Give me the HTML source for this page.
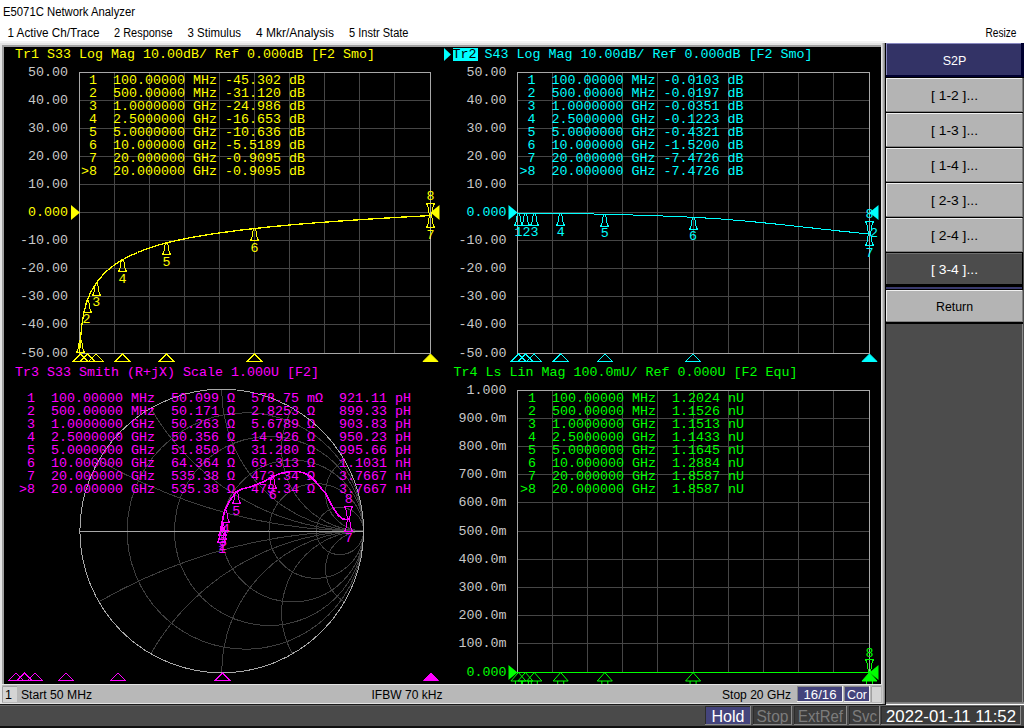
<!DOCTYPE html><html><head><meta charset="utf-8"><style>html,body{margin:0;padding:0;width:1024px;height:728px;overflow:hidden;background:#fff}svg{display:block}text{white-space:pre}</style></head><body>
<svg width="1024" height="728" viewBox="0 0 1024 728">
<rect x="0" y="0" width="1024" height="728" fill="#ffffff"/>
<text x="3" y="16" fill="#000" font-family="'Liberation Sans', sans-serif" font-size="12.5" text-anchor="start" textLength="132" lengthAdjust="spacingAndGlyphs" xml:space="preserve" >E5071C Network Analyzer</text>
<text x="7.5" y="37" fill="#000" font-family="'Liberation Sans', sans-serif" font-size="12.5" text-anchor="start" textLength="92" lengthAdjust="spacingAndGlyphs" xml:space="preserve" >1 Active Ch/Trace</text>
<text x="114" y="37" fill="#000" font-family="'Liberation Sans', sans-serif" font-size="12.5" text-anchor="start" textLength="58.5" lengthAdjust="spacingAndGlyphs" xml:space="preserve" >2 Response</text>
<text x="187.5" y="37" fill="#000" font-family="'Liberation Sans', sans-serif" font-size="12.5" text-anchor="start" textLength="53.5" lengthAdjust="spacingAndGlyphs" xml:space="preserve" >3 Stimulus</text>
<text x="256" y="37" fill="#000" font-family="'Liberation Sans', sans-serif" font-size="12.5" text-anchor="start" textLength="78" lengthAdjust="spacingAndGlyphs" xml:space="preserve" >4 Mkr/Analysis</text>
<text x="349" y="37" fill="#000" font-family="'Liberation Sans', sans-serif" font-size="12.5" text-anchor="start" textLength="59.5" lengthAdjust="spacingAndGlyphs" xml:space="preserve" >5 Instr State</text>
<text x="985.5" y="37" fill="#000" font-family="'Liberation Sans', sans-serif" font-size="12.5" text-anchor="start" textLength="31" lengthAdjust="spacingAndGlyphs" xml:space="preserve" >Resize</text>
<rect x="0" y="41" width="885" height="664" fill="#e4e4e4"/>
<rect x="0" y="41" width="885" height="2" fill="#f2f2f2"/>
<rect x="2" y="45" width="879" height="2" fill="#a0a0a0"/>
<rect x="2" y="45" width="2" height="639" fill="#a0a0a0"/>
<rect x="882" y="43" width="1" height="661" fill="#c8c8c8"/>
<rect x="883" y="43" width="1" height="661" fill="#a8a8a8"/>
<rect x="884" y="43" width="1" height="661" fill="#8a8a8a"/>
<rect x="885" y="43" width="1" height="662" fill="#000"/>
<rect x="4" y="47" width="877" height="637" fill="#000"/>
<rect x="886" y="43" width="138" height="660" fill="#4c4c4c"/>
<line x1="114.5" y1="72" x2="114.5" y2="353" stroke="#464646" stroke-width="1"/>
<line x1="149.5" y1="72" x2="149.5" y2="353" stroke="#464646" stroke-width="1"/>
<line x1="184.5" y1="72" x2="184.5" y2="353" stroke="#464646" stroke-width="1"/>
<line x1="219.5" y1="72" x2="219.5" y2="353" stroke="#464646" stroke-width="1"/>
<line x1="254.5" y1="72" x2="254.5" y2="353" stroke="#464646" stroke-width="1"/>
<line x1="289.5" y1="72" x2="289.5" y2="353" stroke="#464646" stroke-width="1"/>
<line x1="324.5" y1="72" x2="324.5" y2="353" stroke="#464646" stroke-width="1"/>
<line x1="359.5" y1="72" x2="359.5" y2="353" stroke="#464646" stroke-width="1"/>
<line x1="394.5" y1="72" x2="394.5" y2="353" stroke="#464646" stroke-width="1"/>
<line x1="79" y1="100.5" x2="430" y2="100.5" stroke="#464646" stroke-width="1"/>
<line x1="79" y1="128.5" x2="430" y2="128.5" stroke="#464646" stroke-width="1"/>
<line x1="79" y1="156.5" x2="430" y2="156.5" stroke="#464646" stroke-width="1"/>
<line x1="79" y1="184.5" x2="430" y2="184.5" stroke="#464646" stroke-width="1"/>
<line x1="79" y1="212.5" x2="430" y2="212.5" stroke="#464646" stroke-width="1"/>
<line x1="79" y1="240.5" x2="430" y2="240.5" stroke="#464646" stroke-width="1"/>
<line x1="79" y1="268.5" x2="430" y2="268.5" stroke="#464646" stroke-width="1"/>
<line x1="79" y1="296.5" x2="430" y2="296.5" stroke="#464646" stroke-width="1"/>
<line x1="79" y1="324.5" x2="430" y2="324.5" stroke="#464646" stroke-width="1"/>
<rect x="79.5" y="72.5" width="351" height="281" fill="none" stroke="#a8a8a8" stroke-width="1"/>
<line x1="552.5" y1="72" x2="552.5" y2="353" stroke="#464646" stroke-width="1"/>
<line x1="587.5" y1="72" x2="587.5" y2="353" stroke="#464646" stroke-width="1"/>
<line x1="622.5" y1="72" x2="622.5" y2="353" stroke="#464646" stroke-width="1"/>
<line x1="657.5" y1="72" x2="657.5" y2="353" stroke="#464646" stroke-width="1"/>
<line x1="693.5" y1="72" x2="693.5" y2="353" stroke="#464646" stroke-width="1"/>
<line x1="728.5" y1="72" x2="728.5" y2="353" stroke="#464646" stroke-width="1"/>
<line x1="763.5" y1="72" x2="763.5" y2="353" stroke="#464646" stroke-width="1"/>
<line x1="798.5" y1="72" x2="798.5" y2="353" stroke="#464646" stroke-width="1"/>
<line x1="833.5" y1="72" x2="833.5" y2="353" stroke="#464646" stroke-width="1"/>
<line x1="517" y1="100.5" x2="869" y2="100.5" stroke="#464646" stroke-width="1"/>
<line x1="517" y1="128.5" x2="869" y2="128.5" stroke="#464646" stroke-width="1"/>
<line x1="517" y1="156.5" x2="869" y2="156.5" stroke="#464646" stroke-width="1"/>
<line x1="517" y1="184.5" x2="869" y2="184.5" stroke="#464646" stroke-width="1"/>
<line x1="517" y1="212.5" x2="869" y2="212.5" stroke="#464646" stroke-width="1"/>
<line x1="517" y1="240.5" x2="869" y2="240.5" stroke="#464646" stroke-width="1"/>
<line x1="517" y1="268.5" x2="869" y2="268.5" stroke="#464646" stroke-width="1"/>
<line x1="517" y1="296.5" x2="869" y2="296.5" stroke="#464646" stroke-width="1"/>
<line x1="517" y1="324.5" x2="869" y2="324.5" stroke="#464646" stroke-width="1"/>
<rect x="517.5" y="72.5" width="352" height="281" fill="none" stroke="#a8a8a8" stroke-width="1"/>
<line x1="552.5" y1="390" x2="552.5" y2="672" stroke="#464646" stroke-width="1"/>
<line x1="587.5" y1="390" x2="587.5" y2="672" stroke="#464646" stroke-width="1"/>
<line x1="622.5" y1="390" x2="622.5" y2="672" stroke="#464646" stroke-width="1"/>
<line x1="657.5" y1="390" x2="657.5" y2="672" stroke="#464646" stroke-width="1"/>
<line x1="693.5" y1="390" x2="693.5" y2="672" stroke="#464646" stroke-width="1"/>
<line x1="728.5" y1="390" x2="728.5" y2="672" stroke="#464646" stroke-width="1"/>
<line x1="763.5" y1="390" x2="763.5" y2="672" stroke="#464646" stroke-width="1"/>
<line x1="798.5" y1="390" x2="798.5" y2="672" stroke="#464646" stroke-width="1"/>
<line x1="833.5" y1="390" x2="833.5" y2="672" stroke="#464646" stroke-width="1"/>
<line x1="517" y1="418.5" x2="869" y2="418.5" stroke="#464646" stroke-width="1"/>
<line x1="517" y1="446.5" x2="869" y2="446.5" stroke="#464646" stroke-width="1"/>
<line x1="517" y1="474.5" x2="869" y2="474.5" stroke="#464646" stroke-width="1"/>
<line x1="517" y1="502.5" x2="869" y2="502.5" stroke="#464646" stroke-width="1"/>
<line x1="517" y1="531.5" x2="869" y2="531.5" stroke="#464646" stroke-width="1"/>
<line x1="517" y1="559.5" x2="869" y2="559.5" stroke="#464646" stroke-width="1"/>
<line x1="517" y1="587.5" x2="869" y2="587.5" stroke="#464646" stroke-width="1"/>
<line x1="517" y1="615.5" x2="869" y2="615.5" stroke="#464646" stroke-width="1"/>
<line x1="517" y1="643.5" x2="869" y2="643.5" stroke="#464646" stroke-width="1"/>
<rect x="517.5" y="390.5" width="352" height="282" fill="none" stroke="#a8a8a8" stroke-width="1"/>
<text x="68" y="75.8" fill="#c8c8c8" font-family="'Liberation Mono', monospace" font-size="13.333" xml:space="preserve" text-anchor="end">50.00</text>
<text x="68" y="103.8" fill="#c8c8c8" font-family="'Liberation Mono', monospace" font-size="13.333" xml:space="preserve" text-anchor="end">40.00</text>
<text x="68" y="131.8" fill="#c8c8c8" font-family="'Liberation Mono', monospace" font-size="13.333" xml:space="preserve" text-anchor="end">30.00</text>
<text x="68" y="159.8" fill="#c8c8c8" font-family="'Liberation Mono', monospace" font-size="13.333" xml:space="preserve" text-anchor="end">20.00</text>
<text x="68" y="187.8" fill="#c8c8c8" font-family="'Liberation Mono', monospace" font-size="13.333" xml:space="preserve" text-anchor="end">10.00</text>
<text x="68" y="215.8" fill="#ffff00" font-family="'Liberation Mono', monospace" font-size="13.333" xml:space="preserve" text-anchor="end">0.000</text>
<text x="68" y="243.8" fill="#c8c8c8" font-family="'Liberation Mono', monospace" font-size="13.333" xml:space="preserve" text-anchor="end">-10.00</text>
<text x="68" y="271.8" fill="#c8c8c8" font-family="'Liberation Mono', monospace" font-size="13.333" xml:space="preserve" text-anchor="end">-20.00</text>
<text x="68" y="299.8" fill="#c8c8c8" font-family="'Liberation Mono', monospace" font-size="13.333" xml:space="preserve" text-anchor="end">-30.00</text>
<text x="68" y="327.8" fill="#c8c8c8" font-family="'Liberation Mono', monospace" font-size="13.333" xml:space="preserve" text-anchor="end">-40.00</text>
<text x="68" y="356.8" fill="#c8c8c8" font-family="'Liberation Mono', monospace" font-size="13.333" xml:space="preserve" text-anchor="end">-50.00</text>
<text x="506.5" y="75.8" fill="#c8c8c8" font-family="'Liberation Mono', monospace" font-size="13.333" xml:space="preserve" text-anchor="end">50.00</text>
<text x="506.5" y="103.8" fill="#c8c8c8" font-family="'Liberation Mono', monospace" font-size="13.333" xml:space="preserve" text-anchor="end">40.00</text>
<text x="506.5" y="131.8" fill="#c8c8c8" font-family="'Liberation Mono', monospace" font-size="13.333" xml:space="preserve" text-anchor="end">30.00</text>
<text x="506.5" y="159.8" fill="#c8c8c8" font-family="'Liberation Mono', monospace" font-size="13.333" xml:space="preserve" text-anchor="end">20.00</text>
<text x="506.5" y="187.8" fill="#c8c8c8" font-family="'Liberation Mono', monospace" font-size="13.333" xml:space="preserve" text-anchor="end">10.00</text>
<text x="506.5" y="215.8" fill="#00ffff" font-family="'Liberation Mono', monospace" font-size="13.333" xml:space="preserve" text-anchor="end">0.000</text>
<text x="506.5" y="243.8" fill="#c8c8c8" font-family="'Liberation Mono', monospace" font-size="13.333" xml:space="preserve" text-anchor="end">-10.00</text>
<text x="506.5" y="271.8" fill="#c8c8c8" font-family="'Liberation Mono', monospace" font-size="13.333" xml:space="preserve" text-anchor="end">-20.00</text>
<text x="506.5" y="299.8" fill="#c8c8c8" font-family="'Liberation Mono', monospace" font-size="13.333" xml:space="preserve" text-anchor="end">-30.00</text>
<text x="506.5" y="327.8" fill="#c8c8c8" font-family="'Liberation Mono', monospace" font-size="13.333" xml:space="preserve" text-anchor="end">-40.00</text>
<text x="506.5" y="356.8" fill="#c8c8c8" font-family="'Liberation Mono', monospace" font-size="13.333" xml:space="preserve" text-anchor="end">-50.00</text>
<text x="506.5" y="393.8" fill="#c8c8c8" font-family="'Liberation Mono', monospace" font-size="13.333" xml:space="preserve" text-anchor="end">1.000</text>
<text x="506.5" y="421.8" fill="#c8c8c8" font-family="'Liberation Mono', monospace" font-size="13.333" xml:space="preserve" text-anchor="end">900.0m</text>
<text x="506.5" y="449.8" fill="#c8c8c8" font-family="'Liberation Mono', monospace" font-size="13.333" xml:space="preserve" text-anchor="end">800.0m</text>
<text x="506.5" y="477.8" fill="#c8c8c8" font-family="'Liberation Mono', monospace" font-size="13.333" xml:space="preserve" text-anchor="end">700.0m</text>
<text x="506.5" y="505.8" fill="#c8c8c8" font-family="'Liberation Mono', monospace" font-size="13.333" xml:space="preserve" text-anchor="end">600.0m</text>
<text x="506.5" y="534.8" fill="#c8c8c8" font-family="'Liberation Mono', monospace" font-size="13.333" xml:space="preserve" text-anchor="end">500.0m</text>
<text x="506.5" y="562.8" fill="#c8c8c8" font-family="'Liberation Mono', monospace" font-size="13.333" xml:space="preserve" text-anchor="end">400.0m</text>
<text x="506.5" y="590.8" fill="#c8c8c8" font-family="'Liberation Mono', monospace" font-size="13.333" xml:space="preserve" text-anchor="end">300.0m</text>
<text x="506.5" y="618.8" fill="#c8c8c8" font-family="'Liberation Mono', monospace" font-size="13.333" xml:space="preserve" text-anchor="end">200.0m</text>
<text x="506.5" y="646.8" fill="#c8c8c8" font-family="'Liberation Mono', monospace" font-size="13.333" xml:space="preserve" text-anchor="end">100.0m</text>
<text x="506.5" y="675.8" fill="#00ff00" font-family="'Liberation Mono', monospace" font-size="13.333" xml:space="preserve" text-anchor="end">0.000</text>
<g fill="none" stroke="#3e3e3e" stroke-width="1" shape-rendering="crispEdges">
<circle cx="245.33" cy="531.0" r="118.17"/>
<circle cx="268.97" cy="531.0" r="94.53"/>
<circle cx="292.60" cy="531.0" r="70.90"/>
<circle cx="316.23" cy="531.0" r="47.27"/>
<circle cx="339.87" cy="531.0" r="23.63"/>
</g>
<clipPath id="uc"><circle cx="221.7" cy="531.0" r="141.8"/></clipPath>
<g fill="none" stroke="#3e3e3e" stroke-width="1" clip-path="url(#uc)" shape-rendering="crispEdges">
<circle cx="363.50" cy="1.80" r="529.20"/>
<circle cx="363.50" cy="1060.20" r="529.20"/>
<circle cx="363.50" cy="285.40" r="245.60"/>
<circle cx="363.50" cy="776.60" r="245.60"/>
<circle cx="363.50" cy="389.20" r="141.80"/>
<circle cx="363.50" cy="672.80" r="141.80"/>
<circle cx="363.50" cy="449.13" r="81.87"/>
<circle cx="363.50" cy="612.87" r="81.87"/>
<circle cx="363.50" cy="493.00" r="38.00"/>
<circle cx="363.50" cy="569.00" r="38.00"/>
</g>
<line x1="79.89999999999998" y1="531.5" x2="363.5" y2="531.5" stroke="#a8a8a8" stroke-width="1"/>
<circle cx="221.7" cy="531.0" r="141.8" fill="none" stroke="#a8a8a8" stroke-width="1" shape-rendering="crispEdges"/>
<polyline fill="none" stroke="#ffff00" stroke-width="1.3" shape-rendering="crispEdges" points="79.5,353.5 80.1,344.8 80.7,336.5 81.3,330.3 81.8,325.3 82.4,321.2 83.0,317.6 83.6,314.5 84.2,311.8 84.8,309.3 85.4,307.1 85.9,305.0 86.5,303.1 87.1,301.3 87.7,299.7 88.3,298.1 88.9,296.6 89.5,295.3 90.0,294.0 90.6,292.7 91.2,291.5 91.8,290.4 92.4,289.3 93.0,288.3 93.6,287.3 94.1,286.3 94.7,285.4 95.3,284.5 95.9,283.7 96.5,282.8 97.1,282.0 97.7,281.2 98.3,280.4 98.8,279.7 99.4,279.0 100.0,278.2 100.6,277.5 101.2,276.9 101.8,276.2 102.4,275.6 102.9,274.9 103.5,274.3 104.1,273.7 104.7,273.1 105.3,272.6 105.9,272.0 106.5,271.5 107.0,270.9 107.6,270.4 108.2,269.9 108.8,269.4 109.4,268.9 110.0,268.4 110.6,267.9 111.1,267.5 111.7,267.0 112.3,266.5 112.9,266.1 113.5,265.7 114.1,265.2 114.7,264.8 115.2,264.4 115.8,264.0 116.4,263.6 117.0,263.2 117.6,262.8 118.2,262.5 118.8,262.1 119.3,261.7 119.9,261.4 120.5,261.0 121.1,260.7 121.7,260.3 122.3,260.0 122.9,259.6 123.4,259.3 124.0,259.0 124.6,258.7 125.2,258.4 125.8,258.0 126.4,257.7 127.0,257.4 127.6,257.1 128.1,256.8 128.7,256.5 129.3,256.2 129.9,256.0 130.5,255.7 131.1,255.4 131.7,255.1 132.2,254.8 132.8,254.6 133.4,254.3 134.0,254.0 134.6,253.8 135.2,253.5 135.8,253.2 136.3,253.0 136.9,252.7 137.5,252.5 138.1,252.2 138.7,252.0 139.3,251.8 139.9,251.5 140.4,251.3 141.0,251.0 141.6,250.8 142.2,250.6 142.8,250.4 143.4,250.1 144.0,249.9 144.5,249.7 145.1,249.5 145.7,249.3 146.3,249.0 146.9,248.8 147.5,248.6 148.1,248.4 148.6,248.2 149.2,248.0 149.8,247.8 150.4,247.6 151.0,247.4 151.6,247.2 152.2,247.0 152.7,246.9 153.3,246.7 153.9,246.5 154.5,246.3 155.1,246.1 155.7,245.9 156.3,245.8 156.8,245.6 157.4,245.4 158.0,245.2 158.6,245.1 159.2,244.9 159.8,244.7 160.4,244.6 161.0,244.4 161.5,244.2 162.1,244.1 162.7,243.9 163.3,243.8 163.9,243.6 164.5,243.4 165.1,243.3 165.6,243.1 166.2,243.0 166.8,242.8 167.4,242.7 168.0,242.5 168.6,242.4 169.2,242.2 169.7,242.1 170.3,242.0 170.9,241.8 171.5,241.7 172.1,241.5 172.7,241.4 173.3,241.3 173.8,241.1 174.4,241.0 175.0,240.9 175.6,240.7 176.2,240.6 176.8,240.5 177.4,240.3 177.9,240.2 178.5,240.1 179.1,240.0 179.7,239.8 180.3,239.7 180.9,239.6 181.5,239.5 182.0,239.3 182.6,239.2 183.2,239.1 183.8,239.0 184.4,238.9 185.0,238.7 185.6,238.6 186.1,238.5 186.7,238.4 187.3,238.3 187.9,238.2 188.5,238.1 189.1,237.9 189.7,237.8 190.2,237.7 190.8,237.6 191.4,237.5 192.0,237.4 192.6,237.3 193.2,237.2 193.8,237.1 194.4,237.0 194.9,236.9 195.5,236.7 196.1,236.6 196.7,236.5 197.3,236.4 197.9,236.3 198.5,236.2 199.0,236.1 199.6,236.0 200.2,235.9 200.8,235.8 201.4,235.7 202.0,235.6 202.6,235.5 203.1,235.4 203.7,235.3 204.3,235.2 204.9,235.2 205.5,235.1 206.1,235.0 206.7,234.9 207.2,234.8 207.8,234.7 208.4,234.6 209.0,234.5 209.6,234.4 210.2,234.3 210.8,234.2 211.3,234.1 211.9,234.0 212.5,234.0 213.1,233.9 213.7,233.8 214.3,233.7 214.9,233.6 215.4,233.5 216.0,233.4 216.6,233.3 217.2,233.3 217.8,233.2 218.4,233.1 219.0,233.0 219.5,232.9 220.1,232.8 220.7,232.8 221.3,232.7 221.9,232.6 222.5,232.5 223.1,232.4 223.7,232.3 224.2,232.3 224.8,232.2 225.4,232.1 226.0,232.0 226.6,231.9 227.2,231.9 227.8,231.8 228.3,231.7 228.9,231.6 229.5,231.5 230.1,231.5 230.7,231.4 231.3,231.3 231.9,231.2 232.4,231.2 233.0,231.1 233.6,231.0 234.2,230.9 234.8,230.9 235.4,230.8 236.0,230.7 236.5,230.6 237.1,230.6 237.7,230.5 238.3,230.4 238.9,230.3 239.5,230.3 240.1,230.2 240.6,230.1 241.2,230.1 241.8,230.0 242.4,229.9 243.0,229.8 243.6,229.8 244.2,229.7 244.7,229.6 245.3,229.6 245.9,229.5 246.5,229.4 247.1,229.4 247.7,229.3 248.3,229.2 248.8,229.2 249.4,229.1 250.0,229.0 250.6,229.0 251.2,228.9 251.8,228.8 252.4,228.8 252.9,228.7 253.5,228.6 254.1,228.6 254.7,228.5 255.3,228.4 255.9,228.4 256.5,228.3 257.1,228.2 257.6,228.2 258.2,228.1 258.8,228.0 259.4,228.0 260.0,227.9 260.6,227.9 261.2,227.8 261.7,227.7 262.3,227.7 262.9,227.6 263.5,227.5 264.1,227.5 264.7,227.4 265.3,227.4 265.8,227.3 266.4,227.2 267.0,227.2 267.6,227.1 268.2,227.1 268.8,227.0 269.4,226.9 269.9,226.9 270.5,226.8 271.1,226.8 271.7,226.7 272.3,226.6 272.9,226.6 273.5,226.5 274.0,226.5 274.6,226.4 275.2,226.4 275.8,226.3 276.4,226.2 277.0,226.2 277.6,226.1 278.1,226.1 278.7,226.0 279.3,226.0 279.9,225.9 280.5,225.9 281.1,225.8 281.7,225.7 282.2,225.7 282.8,225.6 283.4,225.6 284.0,225.5 284.6,225.5 285.2,225.4 285.8,225.4 286.3,225.3 286.9,225.3 287.5,225.2 288.1,225.2 288.7,225.1 289.3,225.0 289.9,225.0 290.5,224.9 291.0,224.9 291.6,224.8 292.2,224.8 292.8,224.7 293.4,224.7 294.0,224.6 294.6,224.6 295.1,224.5 295.7,224.5 296.3,224.4 296.9,224.4 297.5,224.3 298.1,224.3 298.7,224.2 299.2,224.2 299.8,224.1 300.4,224.1 301.0,224.0 301.6,224.0 302.2,223.9 302.8,223.9 303.3,223.8 303.9,223.8 304.5,223.7 305.1,223.7 305.7,223.6 306.3,223.6 306.9,223.5 307.4,223.5 308.0,223.5 308.6,223.4 309.2,223.4 309.8,223.3 310.4,223.3 311.0,223.2 311.5,223.2 312.1,223.1 312.7,223.1 313.3,223.0 313.9,223.0 314.5,222.9 315.1,222.9 315.6,222.8 316.2,222.8 316.8,222.8 317.4,222.7 318.0,222.7 318.6,222.6 319.2,222.6 319.8,222.5 320.3,222.5 320.9,222.4 321.5,222.4 322.1,222.3 322.7,222.3 323.3,222.3 323.9,222.2 324.4,222.2 325.0,222.1 325.6,222.1 326.2,222.0 326.8,222.0 327.4,222.0 328.0,221.9 328.5,221.9 329.1,221.8 329.7,221.8 330.3,221.7 330.9,221.7 331.5,221.7 332.1,221.6 332.6,221.6 333.2,221.5 333.8,221.5 334.4,221.4 335.0,221.4 335.6,221.4 336.2,221.3 336.7,221.3 337.3,221.2 337.9,221.2 338.5,221.1 339.1,221.1 339.7,221.1 340.3,221.0 340.8,221.0 341.4,220.9 342.0,220.9 342.6,220.9 343.2,220.8 343.8,220.8 344.4,220.7 344.9,220.7 345.5,220.7 346.1,220.6 346.7,220.6 347.3,220.5 347.9,220.5 348.5,220.5 349.0,220.4 349.6,220.4 350.2,220.3 350.8,220.3 351.4,220.3 352.0,220.2 352.6,220.2 353.2,220.1 353.7,220.1 354.3,220.1 354.9,220.0 355.5,220.0 356.1,219.9 356.7,219.9 357.3,219.9 357.8,219.8 358.4,219.8 359.0,219.8 359.6,219.7 360.2,219.7 360.8,219.6 361.4,219.6 361.9,219.6 362.5,219.5 363.1,219.5 363.7,219.4 364.3,219.4 364.9,219.4 365.5,219.3 366.0,219.3 366.6,219.3 367.2,219.2 367.8,219.2 368.4,219.1 369.0,219.1 369.6,219.1 370.1,219.0 370.7,219.0 371.3,219.0 371.9,218.9 372.5,218.9 373.1,218.9 373.7,218.8 374.2,218.8 374.8,218.7 375.4,218.7 376.0,218.7 376.6,218.6 377.2,218.6 377.8,218.6 378.3,218.5 378.9,218.5 379.5,218.5 380.1,218.4 380.7,218.4 381.3,218.3 381.9,218.3 382.4,218.3 383.0,218.2 383.6,218.2 384.2,218.2 384.8,218.1 385.4,218.1 386.0,218.1 386.6,218.0 387.1,218.0 387.7,218.0 388.3,217.9 388.9,217.9 389.5,217.9 390.1,217.8 390.7,217.8 391.2,217.8 391.8,217.7 392.4,217.7 393.0,217.6 393.6,217.6 394.2,217.6 394.8,217.5 395.3,217.5 395.9,217.5 396.5,217.4 397.1,217.4 397.7,217.4 398.3,217.3 398.9,217.3 399.4,217.3 400.0,217.2 400.6,217.2 401.2,217.2 401.8,217.1 402.4,217.1 403.0,217.1 403.5,217.0 404.1,217.0 404.7,217.0 405.3,216.9 405.9,216.9 406.5,216.9 407.1,216.8 407.6,216.8 408.2,216.8 408.8,216.7 409.4,216.7 410.0,216.7 410.6,216.6 411.2,216.6 411.7,216.6 412.3,216.5 412.9,216.5 413.5,216.5 414.1,216.4 414.7,216.4 415.3,216.4 415.9,216.3 416.4,216.3 417.0,216.3 417.6,216.3 418.2,216.2 418.8,216.2 419.4,216.2 420.0,216.1 420.5,216.1 421.1,216.1 421.7,216.0 422.3,216.0 422.9,216.0 423.5,215.9 424.1,215.9 424.6,215.9 425.2,215.8 425.8,215.8 426.4,215.8 427.0,215.7 427.6,215.7 428.2,215.7 428.7,215.6 429.3,215.6 429.9,215.6 430.5,215.6"/>
<polyline fill="none" stroke="#00ffff" stroke-width="1" shape-rendering="crispEdges" points="517.5,213.0 518.1,213.0 518.7,213.0 519.3,213.0 519.9,213.0 520.4,213.0 521.0,213.0 521.6,213.0 522.2,213.0 522.8,213.0 523.4,213.0 524.0,213.0 524.6,213.1 525.1,213.1 525.7,213.1 526.3,213.1 526.9,213.1 527.5,213.1 528.1,213.1 528.7,213.1 529.3,213.1 529.8,213.1 530.4,213.1 531.0,213.1 531.6,213.1 532.2,213.1 532.8,213.1 533.4,213.1 534.0,213.1 534.5,213.1 535.1,213.1 535.7,213.1 536.3,213.1 536.9,213.1 537.5,213.1 538.1,213.1 538.7,213.1 539.2,213.1 539.8,213.1 540.4,213.1 541.0,213.1 541.6,213.2 542.2,213.2 542.8,213.2 543.4,213.2 543.9,213.2 544.5,213.2 545.1,213.2 545.7,213.2 546.3,213.2 546.9,213.2 547.5,213.2 548.1,213.2 548.6,213.2 549.2,213.2 549.8,213.2 550.4,213.2 551.0,213.2 551.6,213.2 552.2,213.2 552.8,213.3 553.3,213.3 553.9,213.3 554.5,213.3 555.1,213.3 555.7,213.3 556.3,213.3 556.9,213.3 557.5,213.3 558.0,213.3 558.6,213.3 559.2,213.3 559.8,213.3 560.4,213.3 561.0,213.3 561.6,213.4 562.2,213.4 562.7,213.4 563.3,213.4 563.9,213.4 564.5,213.4 565.1,213.4 565.7,213.4 566.3,213.4 566.9,213.4 567.4,213.4 568.0,213.4 568.6,213.5 569.2,213.5 569.8,213.5 570.4,213.5 571.0,213.5 571.6,213.5 572.2,213.5 572.7,213.5 573.3,213.5 573.9,213.5 574.5,213.6 575.1,213.6 575.7,213.6 576.3,213.6 576.9,213.6 577.4,213.6 578.0,213.6 578.6,213.6 579.2,213.6 579.8,213.7 580.4,213.7 581.0,213.7 581.6,213.7 582.1,213.7 582.7,213.7 583.3,213.7 583.9,213.7 584.5,213.7 585.1,213.8 585.7,213.8 586.3,213.8 586.8,213.8 587.4,213.8 588.0,213.8 588.6,213.8 589.2,213.8 589.8,213.9 590.4,213.9 591.0,213.9 591.5,213.9 592.1,213.9 592.7,213.9 593.3,213.9 593.9,214.0 594.5,214.0 595.1,214.0 595.7,214.0 596.2,214.0 596.8,214.0 597.4,214.0 598.0,214.0 598.6,214.1 599.2,214.1 599.8,214.1 600.4,214.1 600.9,214.1 601.5,214.1 602.1,214.1 602.7,214.2 603.3,214.2 603.9,214.2 604.5,214.2 605.1,214.2 605.6,214.2 606.2,214.2 606.8,214.3 607.4,214.3 608.0,214.3 608.6,214.3 609.2,214.3 609.8,214.3 610.3,214.4 610.9,214.4 611.5,214.4 612.1,214.4 612.7,214.4 613.3,214.4 613.9,214.4 614.5,214.5 615.0,214.5 615.6,214.5 616.2,214.5 616.8,214.5 617.4,214.5 618.0,214.5 618.6,214.6 619.2,214.6 619.8,214.6 620.3,214.6 620.9,214.6 621.5,214.6 622.1,214.7 622.7,214.7 623.3,214.7 623.9,214.7 624.5,214.7 625.0,214.7 625.6,214.8 626.2,214.8 626.8,214.8 627.4,214.8 628.0,214.8 628.6,214.8 629.2,214.9 629.7,214.9 630.3,214.9 630.9,214.9 631.5,214.9 632.1,214.9 632.7,215.0 633.3,215.0 633.9,215.0 634.4,215.0 635.0,215.0 635.6,215.1 636.2,215.1 636.8,215.1 637.4,215.1 638.0,215.1 638.6,215.1 639.1,215.2 639.7,215.2 640.3,215.2 640.9,215.2 641.5,215.2 642.1,215.3 642.7,215.3 643.3,215.3 643.8,215.3 644.4,215.3 645.0,215.3 645.6,215.4 646.2,215.4 646.8,215.4 647.4,215.4 648.0,215.4 648.5,215.5 649.1,215.5 649.7,215.5 650.3,215.5 650.9,215.5 651.5,215.6 652.1,215.6 652.7,215.6 653.2,215.6 653.8,215.6 654.4,215.7 655.0,215.7 655.6,215.7 656.2,215.7 656.8,215.8 657.4,215.8 657.9,215.8 658.5,215.8 659.1,215.8 659.7,215.9 660.3,215.9 660.9,215.9 661.5,215.9 662.1,215.9 662.6,216.0 663.2,216.0 663.8,216.0 664.4,216.0 665.0,216.1 665.6,216.1 666.2,216.1 666.8,216.1 667.3,216.2 667.9,216.2 668.5,216.2 669.1,216.2 669.7,216.2 670.3,216.3 670.9,216.3 671.5,216.3 672.1,216.3 672.6,216.4 673.2,216.4 673.8,216.4 674.4,216.4 675.0,216.5 675.6,216.5 676.2,216.5 676.8,216.5 677.3,216.6 677.9,216.6 678.5,216.6 679.1,216.6 679.7,216.7 680.3,216.7 680.9,216.7 681.5,216.7 682.0,216.8 682.6,216.8 683.2,216.8 683.8,216.8 684.4,216.9 685.0,216.9 685.6,216.9 686.2,216.9 686.7,217.0 687.3,217.0 687.9,217.0 688.5,217.1 689.1,217.1 689.7,217.1 690.3,217.1 690.9,217.2 691.4,217.2 692.0,217.2 692.6,217.2 693.2,217.3 693.8,217.3 694.4,217.3 695.0,217.4 695.6,217.4 696.1,217.4 696.7,217.5 697.3,217.5 697.9,217.5 698.5,217.5 699.1,217.6 699.7,217.6 700.3,217.6 700.8,217.7 701.4,217.7 702.0,217.7 702.6,217.8 703.2,217.8 703.8,217.8 704.4,217.9 705.0,217.9 705.5,218.0 706.1,218.0 706.7,218.0 707.3,218.1 707.9,218.1 708.5,218.1 709.1,218.2 709.7,218.2 710.2,218.2 710.8,218.3 711.4,218.3 712.0,218.4 712.6,218.4 713.2,218.4 713.8,218.5 714.4,218.5 714.9,218.6 715.5,218.6 716.1,218.6 716.7,218.7 717.3,218.7 717.9,218.8 718.5,218.8 719.1,218.9 719.7,218.9 720.2,218.9 720.8,219.0 721.4,219.0 722.0,219.1 722.6,219.1 723.2,219.2 723.8,219.2 724.4,219.3 724.9,219.3 725.5,219.3 726.1,219.4 726.7,219.4 727.3,219.5 727.9,219.5 728.5,219.6 729.1,219.6 729.6,219.7 730.2,219.7 730.8,219.8 731.4,219.8 732.0,219.9 732.6,219.9 733.2,220.0 733.8,220.0 734.3,220.1 734.9,220.1 735.5,220.2 736.1,220.2 736.7,220.3 737.3,220.3 737.9,220.4 738.5,220.4 739.0,220.5 739.6,220.5 740.2,220.6 740.8,220.6 741.4,220.7 742.0,220.7 742.6,220.8 743.2,220.8 743.7,220.9 744.3,220.9 744.9,221.0 745.5,221.0 746.1,221.1 746.7,221.1 747.3,221.2 747.9,221.3 748.4,221.3 749.0,221.4 749.6,221.4 750.2,221.5 750.8,221.5 751.4,221.6 752.0,221.6 752.6,221.7 753.1,221.8 753.7,221.8 754.3,221.9 754.9,221.9 755.5,222.0 756.1,222.0 756.7,222.1 757.3,222.1 757.8,222.2 758.4,222.3 759.0,222.3 759.6,222.4 760.2,222.4 760.8,222.5 761.4,222.6 762.0,222.6 762.5,222.7 763.1,222.7 763.7,222.8 764.3,222.8 764.9,222.9 765.5,223.0 766.1,223.0 766.7,223.1 767.2,223.1 767.8,223.2 768.4,223.3 769.0,223.3 769.6,223.4 770.2,223.4 770.8,223.5 771.4,223.6 772.0,223.6 772.5,223.7 773.1,223.7 773.7,223.8 774.3,223.9 774.9,223.9 775.5,224.0 776.1,224.1 776.7,224.1 777.2,224.2 777.8,224.2 778.4,224.3 779.0,224.4 779.6,224.4 780.2,224.5 780.8,224.6 781.4,224.6 781.9,224.7 782.5,224.7 783.1,224.8 783.7,224.9 784.3,224.9 784.9,225.0 785.5,225.1 786.1,225.1 786.6,225.2 787.2,225.2 787.8,225.3 788.4,225.4 789.0,225.4 789.6,225.5 790.2,225.6 790.8,225.6 791.3,225.7 791.9,225.8 792.5,225.8 793.1,225.9 793.7,225.9 794.3,226.0 794.9,226.1 795.5,226.1 796.0,226.2 796.6,226.3 797.2,226.3 797.8,226.4 798.4,226.5 799.0,226.5 799.6,226.6 800.2,226.7 800.7,226.7 801.3,226.8 801.9,226.8 802.5,226.9 803.1,227.0 803.7,227.0 804.3,227.1 804.9,227.2 805.4,227.2 806.0,227.3 806.6,227.4 807.2,227.4 807.8,227.5 808.4,227.6 809.0,227.6 809.6,227.7 810.1,227.8 810.7,227.8 811.3,227.9 811.9,227.9 812.5,228.0 813.1,228.1 813.7,228.1 814.3,228.2 814.8,228.3 815.4,228.3 816.0,228.4 816.6,228.5 817.2,228.5 817.8,228.6 818.4,228.7 819.0,228.7 819.6,228.8 820.1,228.9 820.7,228.9 821.3,229.0 821.9,229.0 822.5,229.1 823.1,229.2 823.7,229.2 824.3,229.3 824.8,229.4 825.4,229.4 826.0,229.5 826.6,229.6 827.2,229.6 827.8,229.7 828.4,229.8 829.0,229.8 829.5,229.9 830.1,229.9 830.7,230.0 831.3,230.1 831.9,230.1 832.5,230.2 833.1,230.3 833.7,230.3 834.2,230.4 834.8,230.5 835.4,230.5 836.0,230.6 836.6,230.6 837.2,230.7 837.8,230.8 838.4,230.8 838.9,230.9 839.5,231.0 840.1,231.0 840.7,231.1 841.3,231.1 841.9,231.2 842.5,231.3 843.1,231.3 843.6,231.4 844.2,231.5 844.8,231.5 845.4,231.6 846.0,231.6 846.6,231.7 847.2,231.8 847.8,231.8 848.3,231.9 848.9,231.9 849.5,232.0 850.1,232.1 850.7,232.1 851.3,232.2 851.9,232.3 852.5,232.3 853.0,232.4 853.6,232.4 854.2,232.5 854.8,232.6 855.4,232.6 856.0,232.7 856.6,232.7 857.2,232.8 857.7,232.8 858.3,232.9 858.9,233.0 859.5,233.0 860.1,233.1 860.7,233.1 861.3,233.2 861.9,233.3 862.4,233.3 863.0,233.4 863.6,233.4 864.2,233.5 864.8,233.5 865.4,233.6 866.0,233.7 866.6,233.7 867.1,233.8 867.7,233.8 868.3,233.9 868.9,233.9 869.5,234.0"/>
<line x1="517" y1="672.5" x2="870" y2="672.5" stroke="#00ff00" stroke-width="1"/>
<path d="M79.5,340.5 L77.5,351.5 H76.5 V352.5 H84.5 V351.5 H83.5 L81.5,340.5 Z" fill="none" stroke="#ffff00" stroke-width="1" shape-rendering="crispEdges"/>
<path d="M86.5,300.5 L84.5,311.5 H83.5 V312.5 H91.5 V311.5 H90.5 L88.5,300.5 Z" fill="none" stroke="#ffff00" stroke-width="1" shape-rendering="crispEdges"/>
<text x="86.4172932330827" y="323.4472" fill="#ffff00" font-family="'Liberation Mono', monospace" font-size="13.333" xml:space="preserve" text-anchor="middle">2</text>
<path d="M95.5,283.5 L93.5,294.5 H92.5 V295.5 H100.5 V294.5 H99.5 L97.5,283.5 Z" fill="none" stroke="#ffff00" stroke-width="1" shape-rendering="crispEdges"/>
<text x="96.21428571428571" y="306.21066" fill="#ffff00" font-family="'Liberation Mono', monospace" font-size="13.333" xml:space="preserve" text-anchor="middle">3</text>
<path d="M121.5,259.5 L119.5,270.5 H118.5 V271.5 H126.5 V270.5 H125.5 L123.5,259.5 Z" fill="none" stroke="#ffff00" stroke-width="1" shape-rendering="crispEdges"/>
<text x="122.60526315789474" y="282.79493" fill="#ffff00" font-family="'Liberation Mono', monospace" font-size="13.333" xml:space="preserve" text-anchor="middle">4</text>
<path d="M165.5,242.5 L163.5,253.5 H162.5 V254.5 H170.5 V253.5 H169.5 L167.5,242.5 Z" fill="none" stroke="#ffff00" stroke-width="1" shape-rendering="crispEdges"/>
<text x="166.59022556390977" y="265.88716" fill="#ffff00" font-family="'Liberation Mono', monospace" font-size="13.333" xml:space="preserve" text-anchor="middle">5</text>
<path d="M253.5,228.5 L251.5,239.5 H250.5 V240.5 H258.5 V239.5 H257.5 L255.5,228.5 Z" fill="none" stroke="#ffff00" stroke-width="1" shape-rendering="crispEdges"/>
<text x="254.56015037593983" y="251.50810900000002" fill="#ffff00" font-family="'Liberation Mono', monospace" font-size="13.333" xml:space="preserve" text-anchor="middle">6</text>
<path d="M429.5,215.5 L427.5,226.5 H426.5 V227.5 H434.5 V226.5 H433.5 L431.5,215.5 Z" fill="none" stroke="#ffff00" stroke-width="1" shape-rendering="crispEdges"/>
<text x="430.5" y="238.55569500000001" fill="#ffff00" font-family="'Liberation Mono', monospace" font-size="13.333" xml:space="preserve" text-anchor="middle">7</text>
<path d="M429.5,215.5 L427.5,204.5 H426.5 V203.5 H434.5 V204.5 H433.5 L431.5,215.5 Z" fill="none" stroke="#ffff00" stroke-width="1" shape-rendering="crispEdges"/>
<text x="430.5" y="199.55569500000001" fill="#ffff00" font-family="'Liberation Mono', monospace" font-size="13.333" xml:space="preserve" text-anchor="middle">8</text>
<path d="M71,205.0 L80,212.5 L71,220.0 Z" fill="#ffff00"/>
<path d="M439.5,205.0 L430.5,212.5 L439.5,220.0 Z" fill="#ffff00"/>
<path d="M72.9,361.5 L80.4,354.0 L87.9,361.5 Z" fill="none" stroke="#ffff00" stroke-width="1" shape-rendering="crispEdges"/>
<path d="M79.9,361.5 L87.4,354.0 L94.9,361.5 Z" fill="none" stroke="#ffff00" stroke-width="1" shape-rendering="crispEdges"/>
<path d="M88.7,361.5 L96.2,354.0 L103.7,361.5 Z" fill="none" stroke="#ffff00" stroke-width="1" shape-rendering="crispEdges"/>
<path d="M115.1,361.5 L122.6,354.0 L130.1,361.5 Z" fill="none" stroke="#ffff00" stroke-width="1" shape-rendering="crispEdges"/>
<path d="M159.1,361.5 L166.6,354.0 L174.1,361.5 Z" fill="none" stroke="#ffff00" stroke-width="1" shape-rendering="crispEdges"/>
<path d="M247.1,361.5 L254.6,354.0 L262.1,361.5 Z" fill="none" stroke="#ffff00" stroke-width="1" shape-rendering="crispEdges"/>
<path d="M423.0,361.5 L430.5,354.0 L438.0,361.5 Z" fill="#ffff00" stroke="#ffff00" stroke-width="1"/>
<path d="M517.5,213.5 L515.5,224.5 H514.5 V225.5 H522.5 V224.5 H521.5 L519.5,213.5 Z" fill="none" stroke="#00ffff" stroke-width="1" shape-rendering="crispEdges"/>
<text x="518.5" y="236.028943" fill="#00ffff" font-family="'Liberation Mono', monospace" font-size="13.333" xml:space="preserve" text-anchor="middle">1</text>
<path d="M524.5,213.5 L522.5,224.5 H521.5 V225.5 H529.5 V224.5 H528.5 L526.5,213.5 Z" fill="none" stroke="#00ffff" stroke-width="1" shape-rendering="crispEdges"/>
<text x="526.5" y="236.05535700000001" fill="#00ffff" font-family="'Liberation Mono', monospace" font-size="13.333" xml:space="preserve" text-anchor="middle">2</text>
<path d="M533.5,213.5 L531.5,224.5 H530.5 V225.5 H538.5 V224.5 H537.5 L535.5,213.5 Z" fill="none" stroke="#00ffff" stroke-width="1" shape-rendering="crispEdges"/>
<text x="534.5" y="236.098631" fill="#00ffff" font-family="'Liberation Mono', monospace" font-size="13.333" xml:space="preserve" text-anchor="middle">3</text>
<path d="M559.5,213.5 L557.5,224.5 H556.5 V225.5 H564.5 V224.5 H563.5 L561.5,213.5 Z" fill="none" stroke="#00ffff" stroke-width="1" shape-rendering="crispEdges"/>
<text x="560.7280701754386" y="236.343663" fill="#00ffff" font-family="'Liberation Mono', monospace" font-size="13.333" xml:space="preserve" text-anchor="middle">4</text>
<path d="M603.5,214.5 L601.5,225.5 H600.5 V226.5 H608.5 V225.5 H607.5 L605.5,214.5 Z" fill="none" stroke="#00ffff" stroke-width="1" shape-rendering="crispEdges"/>
<text x="604.8383458646616" y="237.214201" fill="#00ffff" font-family="'Liberation Mono', monospace" font-size="13.333" xml:space="preserve" text-anchor="middle">5</text>
<path d="M692.5,217.5 L690.5,228.5 H689.5 V229.5 H697.5 V228.5 H696.5 L694.5,217.5 Z" fill="none" stroke="#00ffff" stroke-width="1" shape-rendering="crispEdges"/>
<text x="693.0588972431078" y="240.2712" fill="#00ffff" font-family="'Liberation Mono', monospace" font-size="13.333" xml:space="preserve" text-anchor="middle">6</text>
<path d="M868.5,233.5 L866.5,244.5 H865.5 V245.5 H873.5 V244.5 H872.5 L870.5,233.5 Z" fill="none" stroke="#00ffff" stroke-width="1" shape-rendering="crispEdges"/>
<text x="869.5" y="256.998006" fill="#00ffff" font-family="'Liberation Mono', monospace" font-size="13.333" xml:space="preserve" text-anchor="middle">7</text>
<path d="M868.5,233.5 L866.5,222.5 H865.5 V221.5 H873.5 V222.5 H872.5 L870.5,233.5 Z" fill="none" stroke="#00ffff" stroke-width="1" shape-rendering="crispEdges"/>
<text x="869.5" y="217.99800599999998" fill="#00ffff" font-family="'Liberation Mono', monospace" font-size="13.333" xml:space="preserve" text-anchor="middle">8</text>
<text x="870" y="237" fill="#00ffff" font-family="'Liberation Mono', monospace" font-size="13.333" xml:space="preserve" >2</text>
<path d="M508.5,205.0 L517.5,212.5 L508.5,220.0 Z" fill="#00ffff"/>
<path d="M878.5,205.0 L869.5,212.5 L878.5,220.0 Z" fill="#00ffff"/>
<path d="M510.9,361.5 L518.4,354.0 L525.9,361.5 Z" fill="none" stroke="#00ffff" stroke-width="1" shape-rendering="crispEdges"/>
<path d="M517.9,361.5 L525.4,354.0 L532.9,361.5 Z" fill="none" stroke="#00ffff" stroke-width="1" shape-rendering="crispEdges"/>
<path d="M526.8,361.5 L534.3,354.0 L541.8,361.5 Z" fill="none" stroke="#00ffff" stroke-width="1" shape-rendering="crispEdges"/>
<path d="M553.2,361.5 L560.7,354.0 L568.2,361.5 Z" fill="none" stroke="#00ffff" stroke-width="1" shape-rendering="crispEdges"/>
<path d="M597.3,361.5 L604.8,354.0 L612.3,361.5 Z" fill="none" stroke="#00ffff" stroke-width="1" shape-rendering="crispEdges"/>
<path d="M685.6,361.5 L693.1,354.0 L700.6,361.5 Z" fill="none" stroke="#00ffff" stroke-width="1" shape-rendering="crispEdges"/>
<path d="M862.0,361.5 L869.5,354.0 L877.0,361.5 Z" fill="#00ffff" stroke="#00ffff" stroke-width="1"/>
<path d="M510.9,681.0 L518.4,672.5 L525.9,681.0 Z M515.4,681.0 V686.5 M521.4,681.0 V686.5" fill="none" stroke="#00ff00" stroke-width="1"/>
<path d="M517.9,681.0 L525.4,672.5 L532.9,681.0 Z M522.4,681.0 V686.5 M528.4,681.0 V686.5" fill="none" stroke="#00ff00" stroke-width="1"/>
<path d="M526.8,681.0 L534.3,672.5 L541.8,681.0 Z M531.3,681.0 V686.5 M537.3,681.0 V686.5" fill="none" stroke="#00ff00" stroke-width="1"/>
<path d="M553.2,681.0 L560.7,672.5 L568.2,681.0 Z M557.7,681.0 V686.5 M563.7,681.0 V686.5" fill="none" stroke="#00ff00" stroke-width="1"/>
<path d="M597.3,681.0 L604.8,672.5 L612.3,681.0 Z M601.8,681.0 V686.5 M607.8,681.0 V686.5" fill="none" stroke="#00ff00" stroke-width="1"/>
<path d="M685.6,681.0 L693.1,672.5 L700.6,681.0 Z M690.1,681.0 V686.5 M696.1,681.0 V686.5" fill="none" stroke="#00ff00" stroke-width="1"/>
<path d="M862.0,681.0 L869.5,672.5 L877.0,681.0 Z M866.5,681.0 V686.5 M872.5,681.0 V686.5" fill="none" stroke="#00ff00" stroke-width="1"/>
<path d="M868.5,671.5 L866.5,660.5 H865.5 V659.5 H873.5 V660.5 H872.5 L870.5,671.5 Z" fill="none" stroke="#00ff00" stroke-width="1" shape-rendering="crispEdges"/>
<text x="869.5" y="656.5" fill="#00ff00" font-family="'Liberation Mono', monospace" font-size="13.333" xml:space="preserve" text-anchor="middle">8</text>
<path d="M862.0,681.0 L869.5,672.5 L877.0,681.0 Z" fill="#00ff00"/>
<path d="M508.5,665.0 L517.5,672.5 L508.5,680.0 Z" fill="#00ff00"/>
<path d="M878.5,665.0 L869.5,672.5 L878.5,680.0 Z" fill="#00ff00"/>
<polyline fill="none" stroke="#ff00ff" stroke-width="1.6" shape-rendering="crispEdges" points="222.0,531.0 222.3,525.0 223.0,517.0 225.0,510.0 229.0,502.0 236.0,492.0 242.0,489.0 250.0,487.0 263.0,482.0 272.0,477.0 280.0,473.5 291.6,471.5 298.0,471.5 304.0,473.0 310.0,476.0 316.0,482.0 321.0,488.0 326.0,494.0 330.0,502.0 334.0,509.0 338.0,515.0 342.0,518.5 345.0,519.5 348.5,519.5"/>
<path d="M220.5,530.5 L218.5,541.5 H217.5 V542.5 H225.5 V541.5 H224.5 L222.5,530.5 Z" fill="none" stroke="#ff00ff" stroke-width="1" shape-rendering="crispEdges"/>
<text x="222.34497853566344" y="553.1809823907083" fill="#ff00ff" font-family="'Liberation Mono', monospace" font-size="13.333" xml:space="preserve" text-anchor="middle">1</text>
<path d="M221.5,527.5 L219.5,538.5 H218.5 V539.5 H226.5 V538.5 H225.5 L223.5,527.5 Z" fill="none" stroke="#ff00ff" stroke-width="1" shape-rendering="crispEdges"/>
<text x="222.5545851768707" y="550.0105646294857" fill="#ff00ff" font-family="'Liberation Mono', monospace" font-size="13.333" xml:space="preserve" text-anchor="middle">2</text>
<path d="M221.5,523.5 L219.5,534.5 H218.5 V535.5 H226.5 V534.5 H225.5 L223.5,523.5 Z" fill="none" stroke="#ff00ff" stroke-width="1" shape-rendering="crispEdges"/>
<text x="223.02421927849025" y="546.0151266056333" fill="#ff00ff" font-family="'Liberation Mono', monospace" font-size="13.333" xml:space="preserve" text-anchor="middle">3</text>
<path d="M224.5,510.5 L222.5,521.5 H221.5 V522.5 H229.5 V521.5 H228.5 L226.5,510.5 Z" fill="none" stroke="#ff00ff" stroke-width="1" shape-rendering="crispEdges"/>
<text x="225.7609706700951" y="533.43963737317" fill="#ff00ff" font-family="'Liberation Mono', monospace" font-size="13.333" xml:space="preserve" text-anchor="middle">4</text>
<path d="M235.5,491.5 L233.5,502.5 H232.5 V503.5 H240.5 V502.5 H239.5 L237.5,491.5 Z" fill="none" stroke="#ff00ff" stroke-width="1" shape-rendering="crispEdges"/>
<text x="236.27566094912243" y="514.927075841812" fill="#ff00ff" font-family="'Liberation Mono', monospace" font-size="13.333" xml:space="preserve" text-anchor="middle">5</text>
<path d="M271.5,476.5 L269.5,487.5 H268.5 V488.5 H276.5 V487.5 H275.5 L273.5,476.5 Z" fill="none" stroke="#ff00ff" stroke-width="1" shape-rendering="crispEdges"/>
<text x="272.8192554580482" y="499.040795648663" fill="#ff00ff" font-family="'Liberation Mono', monospace" font-size="13.333" xml:space="preserve" text-anchor="middle">6</text>
<path d="M347.5,519.5 L345.5,530.5 H344.5 V531.5 H352.5 V530.5 H351.5 L349.5,519.5 Z" fill="none" stroke="#ff00ff" stroke-width="1" shape-rendering="crispEdges"/>
<text x="348.85311780674954" y="542.1564877219017" fill="#ff00ff" font-family="'Liberation Mono', monospace" font-size="13.333" xml:space="preserve" text-anchor="middle">7</text>
<path d="M347.5,518.5 L345.5,507.5 H344.5 V506.5 H352.5 V507.5 H351.5 L349.5,518.5 Z" fill="none" stroke="#ff00ff" stroke-width="1" shape-rendering="crispEdges"/>
<text x="348.85311780674954" y="503.1564877219017" fill="#ff00ff" font-family="'Liberation Mono', monospace" font-size="13.333" xml:space="preserve" text-anchor="middle">8</text>
<path d="M8.5,680.5 L16.0,673.0 L23.5,680.5 Z" fill="none" stroke="#ff00ff" stroke-width="1" shape-rendering="crispEdges"/>
<path d="M16.9,680.5 L24.4,673.0 L31.9,680.5 Z" fill="none" stroke="#ff00ff" stroke-width="1" shape-rendering="crispEdges"/>
<path d="M27.3,680.5 L34.8,673.0 L42.3,680.5 Z" fill="none" stroke="#ff00ff" stroke-width="1" shape-rendering="crispEdges"/>
<path d="M58.6,680.5 L66.1,673.0 L73.6,680.5 Z" fill="none" stroke="#ff00ff" stroke-width="1" shape-rendering="crispEdges"/>
<path d="M110.7,680.5 L118.2,673.0 L125.7,680.5 Z" fill="none" stroke="#ff00ff" stroke-width="1" shape-rendering="crispEdges"/>
<path d="M215.0,680.5 L222.5,673.0 L230.0,680.5 Z" fill="none" stroke="#ff00ff" stroke-width="1" shape-rendering="crispEdges"/>
<path d="M423.5,680.5 L431.0,673.0 L438.5,680.5 Z" fill="#ff00ff" stroke="#ff00ff" stroke-width="1"/>
<text x="15" y="58" fill="#ffff00" font-family="'Liberation Mono', monospace" font-size="13.333" xml:space="preserve" >Tr1 S33 Log Mag 10.00dB/ Ref 0.000dB [F2 Smo]</text>
<path d="M444,48 L451,54.5 L444,61 Z" fill="#00ffff"/>
<rect x="453" y="48" width="25" height="13" fill="#00ffff"/>
<text x="452.5" y="58" fill="#000" font-family="'Liberation Mono', monospace" font-size="13.333" xml:space="preserve" >Tr2</text>
<text x="452.5" y="58" fill="#00ffff" font-family="'Liberation Mono', monospace" font-size="13.333" xml:space="preserve" >    S43 Log Mag 10.00dB/ Ref 0.000dB [F2 Smo]</text>
<text x="15" y="376" fill="#ff00ff" font-family="'Liberation Mono', monospace" font-size="13.333" xml:space="preserve" >Tr3 S33 Smith (R+jX) Scale 1.000U [F2]</text>
<text x="453.5" y="376" fill="#00ff00" font-family="'Liberation Mono', monospace" font-size="13.333" xml:space="preserve" >Tr4 Ls Lin Mag 100.0mU/ Ref 0.000U [F2 Equ]</text>
<text x="81" y="84" fill="#ffff00" font-family="'Liberation Mono', monospace" font-size="13.333" xml:space="preserve" > 1  100.00000 MHz -45.302 dB</text>
<text x="81" y="97" fill="#ffff00" font-family="'Liberation Mono', monospace" font-size="13.333" xml:space="preserve" > 2  500.00000 MHz -31.120 dB</text>
<text x="81" y="110" fill="#ffff00" font-family="'Liberation Mono', monospace" font-size="13.333" xml:space="preserve" > 3  1.0000000 GHz -24.986 dB</text>
<text x="81" y="123" fill="#ffff00" font-family="'Liberation Mono', monospace" font-size="13.333" xml:space="preserve" > 4  2.5000000 GHz -16.653 dB</text>
<text x="81" y="136" fill="#ffff00" font-family="'Liberation Mono', monospace" font-size="13.333" xml:space="preserve" > 5  5.0000000 GHz -10.636 dB</text>
<text x="81" y="149" fill="#ffff00" font-family="'Liberation Mono', monospace" font-size="13.333" xml:space="preserve" > 6  10.000000 GHz -5.5189 dB</text>
<text x="81" y="162" fill="#ffff00" font-family="'Liberation Mono', monospace" font-size="13.333" xml:space="preserve" > 7  20.000000 GHz -0.9095 dB</text>
<text x="81" y="175" fill="#ffff00" font-family="'Liberation Mono', monospace" font-size="13.333" xml:space="preserve" >&gt;8  20.000000 GHz -0.9095 dB</text>
<text x="519.5" y="84" fill="#00ffff" font-family="'Liberation Mono', monospace" font-size="13.333" xml:space="preserve" > 1  100.00000 MHz -0.0103 dB</text>
<text x="519.5" y="97" fill="#00ffff" font-family="'Liberation Mono', monospace" font-size="13.333" xml:space="preserve" > 2  500.00000 MHz -0.0197 dB</text>
<text x="519.5" y="110" fill="#00ffff" font-family="'Liberation Mono', monospace" font-size="13.333" xml:space="preserve" > 3  1.0000000 GHz -0.0351 dB</text>
<text x="519.5" y="123" fill="#00ffff" font-family="'Liberation Mono', monospace" font-size="13.333" xml:space="preserve" > 4  2.5000000 GHz -0.1223 dB</text>
<text x="519.5" y="136" fill="#00ffff" font-family="'Liberation Mono', monospace" font-size="13.333" xml:space="preserve" > 5  5.0000000 GHz -0.4321 dB</text>
<text x="519.5" y="149" fill="#00ffff" font-family="'Liberation Mono', monospace" font-size="13.333" xml:space="preserve" > 6  10.000000 GHz -1.5200 dB</text>
<text x="519.5" y="162" fill="#00ffff" font-family="'Liberation Mono', monospace" font-size="13.333" xml:space="preserve" > 7  20.000000 GHz -7.4726 dB</text>
<text x="519.5" y="175" fill="#00ffff" font-family="'Liberation Mono', monospace" font-size="13.333" xml:space="preserve" >&gt;8  20.000000 GHz -7.4726 dB</text>
<text x="19" y="402" fill="#ff00ff" font-family="'Liberation Mono', monospace" font-size="13.333" xml:space="preserve" > 1  100.00000 MHz  50.099 Ω  578.75 mΩ  921.11 pH</text>
<text x="19" y="415" fill="#ff00ff" font-family="'Liberation Mono', monospace" font-size="13.333" xml:space="preserve" > 2  500.00000 MHz  50.171 Ω  2.8253 Ω   899.33 pH</text>
<text x="19" y="428" fill="#ff00ff" font-family="'Liberation Mono', monospace" font-size="13.333" xml:space="preserve" > 3  1.0000000 GHz  50.263 Ω  5.6789 Ω   903.83 pH</text>
<text x="19" y="441" fill="#ff00ff" font-family="'Liberation Mono', monospace" font-size="13.333" xml:space="preserve" > 4  2.5000000 GHz  50.356 Ω  14.926 Ω   950.23 pH</text>
<text x="19" y="454" fill="#ff00ff" font-family="'Liberation Mono', monospace" font-size="13.333" xml:space="preserve" > 5  5.0000000 GHz  51.850 Ω  31.280 Ω   995.66 pH</text>
<text x="19" y="467" fill="#ff00ff" font-family="'Liberation Mono', monospace" font-size="13.333" xml:space="preserve" > 6  10.000000 GHz  64.364 Ω  69.313 Ω   1.1031 nH</text>
<text x="19" y="480" fill="#ff00ff" font-family="'Liberation Mono', monospace" font-size="13.333" xml:space="preserve" > 7  20.000000 GHz  535.38 Ω  473.34 Ω   3.7667 nH</text>
<text x="19" y="493" fill="#ff00ff" font-family="'Liberation Mono', monospace" font-size="13.333" xml:space="preserve" >&gt;8  20.000000 GHz  535.38 Ω  473.34 Ω   3.7667 nH</text>
<text x="520" y="402" fill="#00ff00" font-family="'Liberation Mono', monospace" font-size="13.333" xml:space="preserve" > 1  100.00000 MHz  1.2024 nU</text>
<text x="520" y="415" fill="#00ff00" font-family="'Liberation Mono', monospace" font-size="13.333" xml:space="preserve" > 2  500.00000 MHz  1.1526 nU</text>
<text x="520" y="428" fill="#00ff00" font-family="'Liberation Mono', monospace" font-size="13.333" xml:space="preserve" > 3  1.0000000 GHz  1.1513 nU</text>
<text x="520" y="441" fill="#00ff00" font-family="'Liberation Mono', monospace" font-size="13.333" xml:space="preserve" > 4  2.5000000 GHz  1.1433 nU</text>
<text x="520" y="454" fill="#00ff00" font-family="'Liberation Mono', monospace" font-size="13.333" xml:space="preserve" > 5  5.0000000 GHz  1.1645 nU</text>
<text x="520" y="467" fill="#00ff00" font-family="'Liberation Mono', monospace" font-size="13.333" xml:space="preserve" > 6  10.000000 GHz  1.2884 nU</text>
<text x="520" y="480" fill="#00ff00" font-family="'Liberation Mono', monospace" font-size="13.333" xml:space="preserve" > 7  20.000000 GHz  1.8587 nU</text>
<text x="520" y="493" fill="#00ff00" font-family="'Liberation Mono', monospace" font-size="13.333" xml:space="preserve" >&gt;8  20.000000 GHz  1.8587 nU</text>
<rect x="0" y="684" width="885" height="20" fill="#e4e4e4"/>
<rect x="2" y="685" width="880" height="18" fill="#b8b8b8"/>
<rect x="882" y="43" width="1" height="661" fill="#c8c8c8"/>
<rect x="883" y="43" width="1" height="661" fill="#a8a8a8"/>
<rect x="884" y="43" width="1" height="661" fill="#8a8a8a"/>
<rect x="885" y="43" width="1" height="662" fill="#000"/>
<rect x="2" y="686" width="15" height="16" fill="#d4d4d4"/>
<path d="M2.5,702 V686.5 H17" fill="none" stroke="#a0a0a0"/>
<text x="5" y="698.5" fill="#000" font-family="'Liberation Sans', sans-serif" font-size="12.5" text-anchor="start" xml:space="preserve" >1</text>
<text x="21" y="699" fill="#000" font-family="'Liberation Sans', sans-serif" font-size="12.5" text-anchor="start" textLength="71" lengthAdjust="spacingAndGlyphs" xml:space="preserve" >Start 50 MHz</text>
<text x="371.5" y="699" fill="#000" font-family="'Liberation Sans', sans-serif" font-size="12.5" text-anchor="start" textLength="71" lengthAdjust="spacingAndGlyphs" xml:space="preserve" >IFBW 70 kHz</text>
<text x="722" y="699" fill="#000" font-family="'Liberation Sans', sans-serif" font-size="12.5" text-anchor="start" textLength="69" lengthAdjust="spacingAndGlyphs" xml:space="preserve" >Stop 20 GHz</text>
<rect x="797" y="686" width="46" height="16" fill="#f0f0f0"/><rect x="797" y="686" width="45" height="15" fill="#8a8a8a"/>
<rect x="798" y="687" width="44" height="14" fill="#44447c"/>
<text x="820" y="699" fill="#fff" font-family="'Liberation Sans', sans-serif" font-size="12.5" text-anchor="middle" textLength="33" lengthAdjust="spacingAndGlyphs" xml:space="preserve" >16/16</text>
<rect x="844" y="686" width="26" height="16" fill="#f0f0f0"/><rect x="844" y="686" width="25" height="15" fill="#8a8a8a"/>
<rect x="845" y="687" width="24" height="14" fill="#44447c"/>
<text x="857" y="699" fill="#fff" font-family="'Liberation Sans', sans-serif" font-size="12.5" text-anchor="middle" textLength="20" lengthAdjust="spacingAndGlyphs" xml:space="preserve" >Cor</text>
<rect x="871" y="686" width="10" height="16" fill="#d4d4d4"/>
<path d="M871.5,702 V686.5 H881" fill="none" stroke="#a0a0a0"/>
<rect x="0" y="704" width="886" height="1" fill="#1a1a1a"/>
<rect x="0" y="705" width="1024" height="23" fill="#4a4a4a"/>
<rect x="0" y="705" width="1024" height="1" fill="#6a6a6a"/>
<rect x="0" y="726" width="1024" height="2" fill="#101010"/>
<rect x="705" y="706" width="46" height="19" fill="#8a8a8a"/>
<rect x="705" y="706" width="45" height="18" fill="#2c2c2c"/>
<rect x="706" y="707" width="44" height="17" fill="#44447c"/>
<text x="728.0" y="722" fill="#fff" font-family="'Liberation Sans', sans-serif" font-size="16.5" text-anchor="middle" textLength="33" lengthAdjust="spacingAndGlyphs" xml:space="preserve" >Hold</text>
<rect x="753" y="706" width="39" height="19" fill="#8a8a8a"/>
<rect x="753" y="706" width="38" height="18" fill="#2c2c2c"/>
<rect x="754" y="707" width="37" height="17" fill="#3c3c3c"/>
<text x="772.5" y="722" fill="#7c7c7c" font-family="'Liberation Sans', sans-serif" font-size="16.5" text-anchor="middle" textLength="32" lengthAdjust="spacingAndGlyphs" xml:space="preserve" >Stop</text>
<rect x="794" y="706" width="53" height="19" fill="#8a8a8a"/>
<rect x="794" y="706" width="52" height="18" fill="#2c2c2c"/>
<rect x="795" y="707" width="51" height="17" fill="#3c3c3c"/>
<text x="820.5" y="722" fill="#7c7c7c" font-family="'Liberation Sans', sans-serif" font-size="16.5" text-anchor="middle" textLength="45" lengthAdjust="spacingAndGlyphs" xml:space="preserve" >ExtRef</text>
<rect x="849" y="706" width="31" height="19" fill="#8a8a8a"/>
<rect x="849" y="706" width="30" height="18" fill="#2c2c2c"/>
<rect x="850" y="707" width="29" height="17" fill="#3c3c3c"/>
<text x="864.5" y="722" fill="#7c7c7c" font-family="'Liberation Sans', sans-serif" font-size="16.5" text-anchor="middle" textLength="25" lengthAdjust="spacingAndGlyphs" xml:space="preserve" >Svc</text>
<rect x="881" y="706" width="140" height="19" fill="#8a8a8a"/>
<rect x="881" y="706" width="139" height="18" fill="#2c2c2c"/>
<rect x="882" y="707" width="138" height="17" fill="#3c3c3c"/>
<text x="951.0" y="722" fill="#ffffff" font-family="'Liberation Sans', sans-serif" font-size="16.5" text-anchor="middle" textLength="130" lengthAdjust="spacingAndGlyphs" xml:space="preserve" >2022-01-11 11:52</text>
<rect x="886" y="43" width="138" height="35" fill="#000"/>
<rect x="886" y="43" width="138" height="34" fill="#000030"/>
<rect x="886" y="43" width="135" height="32" fill="#8888c0"/>
<rect x="887" y="44" width="134" height="31" fill="#333366"/>
<text x="954.5" y="65.0" fill="#fff" font-family="'Liberation Sans', sans-serif" font-size="12.5" text-anchor="middle" xml:space="preserve" >S2P</text>
<rect x="886" y="78" width="137" height="35" fill="#000"/>
<rect x="886" y="78" width="137" height="34" fill="#808080"/>
<rect x="886" y="78" width="136" height="33" fill="#f0f0f0"/>
<rect x="887" y="79" width="135" height="32" fill="#b4b4b4"/>
<text x="954.5" y="100.0" fill="#000" font-family="'Liberation Sans', sans-serif" font-size="12.5" text-anchor="middle" textLength="47" lengthAdjust="spacingAndGlyphs" xml:space="preserve" >[ 1-2 ]...</text>
<rect x="886" y="113" width="137" height="35" fill="#000"/>
<rect x="886" y="113" width="137" height="34" fill="#808080"/>
<rect x="886" y="113" width="136" height="33" fill="#f0f0f0"/>
<rect x="887" y="114" width="135" height="32" fill="#b4b4b4"/>
<text x="954.5" y="135.0" fill="#000" font-family="'Liberation Sans', sans-serif" font-size="12.5" text-anchor="middle" textLength="47" lengthAdjust="spacingAndGlyphs" xml:space="preserve" >[ 1-3 ]...</text>
<rect x="886" y="148" width="137" height="35" fill="#000"/>
<rect x="886" y="148" width="137" height="34" fill="#808080"/>
<rect x="886" y="148" width="136" height="33" fill="#f0f0f0"/>
<rect x="887" y="149" width="135" height="32" fill="#b4b4b4"/>
<text x="954.5" y="170.0" fill="#000" font-family="'Liberation Sans', sans-serif" font-size="12.5" text-anchor="middle" textLength="47" lengthAdjust="spacingAndGlyphs" xml:space="preserve" >[ 1-4 ]...</text>
<rect x="886" y="183" width="137" height="35" fill="#000"/>
<rect x="886" y="183" width="137" height="34" fill="#808080"/>
<rect x="886" y="183" width="136" height="33" fill="#f0f0f0"/>
<rect x="887" y="184" width="135" height="32" fill="#b4b4b4"/>
<text x="954.5" y="205.0" fill="#000" font-family="'Liberation Sans', sans-serif" font-size="12.5" text-anchor="middle" textLength="47" lengthAdjust="spacingAndGlyphs" xml:space="preserve" >[ 2-3 ]...</text>
<rect x="886" y="218" width="137" height="35" fill="#000"/>
<rect x="886" y="218" width="137" height="34" fill="#808080"/>
<rect x="886" y="218" width="136" height="33" fill="#f0f0f0"/>
<rect x="887" y="219" width="135" height="32" fill="#b4b4b4"/>
<text x="954.5" y="240.0" fill="#000" font-family="'Liberation Sans', sans-serif" font-size="12.5" text-anchor="middle" textLength="47" lengthAdjust="spacingAndGlyphs" xml:space="preserve" >[ 2-4 ]...</text>
<rect x="886" y="253" width="137" height="33" fill="#000"/>
<rect x="886" y="253" width="136" height="31" fill="#6e6e6e"/>
<rect x="887" y="254" width="135" height="30" fill="#4c4c4c"/>
<text x="954.5" y="274.0" fill="#fff" font-family="'Liberation Sans', sans-serif" font-size="12.5" text-anchor="middle" textLength="47" lengthAdjust="spacingAndGlyphs" xml:space="preserve" >[ 3-4 ]...</text>
<rect x="886" y="286" width="137" height="4" fill="#000"/>
<rect x="886" y="287" width="136" height="2" fill="#3a3a6e"/>
<rect x="886" y="290" width="137" height="33" fill="#000"/>
<rect x="886" y="290" width="137" height="32" fill="#808080"/>
<rect x="886" y="290" width="136" height="31" fill="#f0f0f0"/>
<rect x="887" y="291" width="135" height="30" fill="#b4b4b4"/>
<text x="954.5" y="311.0" fill="#000" font-family="'Liberation Sans', sans-serif" font-size="12.5" text-anchor="middle" textLength="37" lengthAdjust="spacingAndGlyphs" xml:space="preserve" >Return</text>
<rect x="886" y="323" width="137" height="380" fill="#4c4c4c"/>
<rect x="886" y="323" width="137" height="1" fill="#000"/>
<rect x="1022" y="324" width="1" height="379" fill="#8a8a8a"/>
<rect x="886" y="702" width="138" height="1" fill="#7a7a7a"/>
<rect x="886" y="703" width="138" height="1" fill="#8e8e8e"/>
</svg></body></html>
